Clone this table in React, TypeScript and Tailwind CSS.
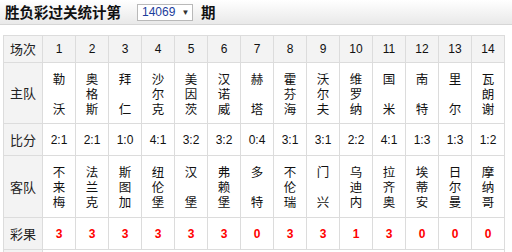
const matches = [
  { no: 1, home: ["勒", "", "沃"], score: "2:1", away: ["不", "来", "梅"], result: "3" },
  { no: 2, home: ["奥", "格", "斯"], score: "2:1", away: ["法", "兰", "克"], result: "3" },
  { no: 3, home: ["拜", "", "仁"], score: "1:0", away: ["斯", "图", "加"], result: "3" },
  { no: 4, home: ["沙", "尔", "克"], score: "4:1", away: ["纽", "伦", "堡"], result: "3" },
  { no: 5, home: ["美", "因", "茨"], score: "3:2", away: ["汉", "", "堡"], result: "3" },
  { no: 6, home: ["汉", "诺", "威"], score: "3:2", away: ["弗", "赖", "堡"], result: "3" },
  { no: 7, home: ["赫", "", "塔"], score: "0:4", away: ["多", "", "特"], result: "0" },
  { no: 8, home: ["霍", "芬", "海"], score: "3:1", away: ["不", "伦", "瑞"], result: "3" },
  { no: 9, home: ["沃", "尔", "夫"], score: "3:1", away: ["门", "", "兴"], result: "3" },
  { no: 10, home: ["维", "罗", "纳"], score: "2:2", away: ["乌", "迪", "内"], result: "1" },
  { no: 11, home: ["国", "", "米"], score: "4:1", away: ["拉", "齐", "奥"], result: "3" },
  { no: 12, home: ["南", "", "特"], score: "1:3", away: ["埃", "蒂", "安"], result: "0" },
  { no: 13, home: ["里", "", "尔"], score: "1:3", away: ["日", "尔", "曼"], result: "0" },
  { no: 14, home: ["瓦", "朗", "谢"], score: "1:2", away: ["摩", "纳", "哥"], result: "0" },
];

const cjk = "font-['Noto_Sans_CJK_SC',sans-serif]";
const num = "font-['Liberation_Sans',Arial,sans-serif]";

function Label({ children }: { children: React.ReactNode }) {
  return (
    <td className={`border border-[#dcdcdc] bg-[#f3f3f3] text-center text-[13px] text-[#222] ${cjk}`}>
      {children}
    </td>
  );
}

// team names are written one character per line
function Stack({ chars }: { chars: string[] }) {
  return (
    <div className={`flex flex-col items-center text-[12.5px] leading-[15px] text-[#111] ${cjk}`}>
      {chars.map((c, i) => (
        <span key={i} className="block h-[15px]">{c}</span>
      ))}
    </div>
  );
}

export default function App() {
  return (
    <div className="w-[512px] h-[252px] overflow-hidden bg-white">
      <div className="h-[25px] border-b border-[#d6d6d6] bg-gradient-to-b from-white to-[#e9e9e9] flex items-center pl-[5px]">
        <span className={`text-[14.5px] font-bold text-[#111] ${cjk}`}>胜负彩过关统计第</span>
        <div className="ml-[16px] h-[17px] w-[56px] border border-[#b9b9b9] bg-white flex items-center pl-[4px]">
          <span className={`text-[12px] text-[#1c3d9c] ${num}`}>14069</span>
          <span className="ml-[6px] text-[8px] text-[#333]">▼</span>
        </div>
        <span className={`ml-[8px] text-[14.5px] font-bold text-[#111] ${cjk}`}>期</span>
      </div>

      <table className="mt-[10px] ml-[3px] w-[501px] table-fixed border-collapse">
        <colgroup>
          <col className="w-[39px]" />
          {matches.map((m) => (
            <col key={m.no} className="w-[33px]" />
          ))}
        </colgroup>
        <tbody>
          <tr className="h-[27px]">
            <Label>场次</Label>
            {matches.map((m) => (
              <td key={m.no} className={`border border-[#dcdcdc] bg-[#f3f3f3] text-center text-[12px] text-[#111] ${num}`}>
                {m.no}
              </td>
            ))}
          </tr>
          <tr className="h-[61px]">
            <Label>主队</Label>
            {matches.map((m) => (
              <td key={m.no} className="border border-[#dcdcdc] align-middle">
                <Stack chars={m.home} />
              </td>
            ))}
          </tr>
          <tr className="h-[32px]">
            <Label>比分</Label>
            {matches.map((m) => (
              <td key={m.no} className={`border border-[#dcdcdc] text-center text-[12px] text-[#111] ${num}`}>
                {m.score}
              </td>
            ))}
          </tr>
          <tr className="h-[62px]">
            <Label>客队</Label>
            {matches.map((m) => (
              <td key={m.no} className="border border-[#dcdcdc] align-middle">
                <Stack chars={m.away} />
              </td>
            ))}
          </tr>
          <tr className="h-[32px]">
            <Label>彩果</Label>
            {matches.map((m) => (
              <td key={m.no} className={`border border-[#dcdcdc] text-center text-[12px] font-bold text-[#ff0000] ${num}`}>
                {m.result}
              </td>
            ))}
          </tr>
          <tr className="h-[20px]">
            <td className="border border-[#dcdcdc] bg-[#f3f3f3]" />
            <td colSpan={14} className="border border-[#dcdcdc]" />
          </tr>
        </tbody>
      </table>
    </div>
  );
}
